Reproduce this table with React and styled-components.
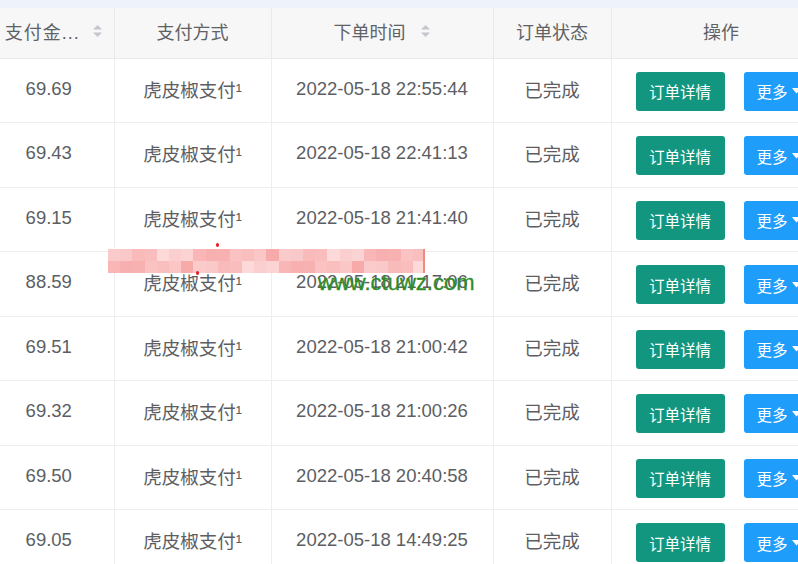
// Required Imports
import React from "react";
import styled, { createGlobalStyle } from "styled-components";
//------------------------------------------------------------------------------------------------------------------------------------------------------------------------------

const orders = [
  { amount: "69.69", time: "2022-05-18 22:55:44" },
  { amount: "69.43", time: "2022-05-18 22:41:13" },
  { amount: "69.15", time: "2022-05-18 21:41:40" },
  { amount: "88.59", time: "2022-05-18 21:17:06" },
  { amount: "69.51", time: "2022-05-18 21:00:42" },
  { amount: "69.32", time: "2022-05-18 21:00:26" },
  { amount: "69.50", time: "2022-05-18 20:40:58" },
  { amount: "69.05", time: "2022-05-18 14:49:25" },
];

const mosaicShades = [
  "#fbcbcb", "#f9bdbd", "#fcd3d3", "#f7b1b1", "#fac6c6", "#f9c9c9", "#fdd9d9",
  "#f8b6b6", "#fac2c2", "#f6aaaa", "#f9baba", "#fbcfcf", "#f7afaf", "#f9bebe",
];
//------------------------------------------------------------------------------------------------------------------------------------------------------------------------------

const SortIcon = () => (
  <svg width="11" height="14" viewBox="0 0 11 14">
    <path d="M5.5 1 L10 5.5 H1 Z" fill="#c3c6cc" />
    <path d="M5.5 13 L10 8.5 H1 Z" fill="#c3c6cc" />
  </svg>
);

const Caret = () => (
  <svg width="9" height="6" viewBox="0 0 9 6">
    <path d="M0 0 H9 L4.5 5.5 Z" fill="#ffffff" />
  </svg>
);

const App = () => {
  return (
    <>
      <GlobalStyle />
      <Page>
        <Table>
          <colgroup>
            <col style={{ width: 130 }} />
            <col style={{ width: 157 }} />
            <col style={{ width: 222 }} />
            <col style={{ width: 118 }} />
            <col style={{ width: 220 }} />
          </colgroup>
          <thead>
            <HeadRow>
              <HeadCell>
                <HeadLabel $gap={12} $shift={10} $spacing={1}>
                  支付金...
                  <SortIcon />
                </HeadLabel>
              </HeadCell>
              <HeadCell>支付方式</HeadCell>
              <HeadCell>
                <HeadLabel $gap={14}>
                  下单时间
                  <SortIcon />
                </HeadLabel>
              </HeadCell>
              <HeadCell>订单状态</HeadCell>
              <HeadCell>操作</HeadCell>
            </HeadRow>
          </thead>
          <tbody>
            {orders.map((order) => (
              <Row key={order.time}>
                <Cell>{order.amount}</Cell>
                <Cell>虎皮椒支付¹</Cell>
                <Cell>{order.time}</Cell>
                <Cell>已完成</Cell>
                <ActionCell>
                  <Actions>
                    <Button $variant="detail">订单详情</Button>
                    <Button $variant="more">
                      更多
                      <Caret />
                    </Button>
                  </Actions>
                </ActionCell>
              </Row>
            ))}
          </tbody>
        </Table>

        <Mosaic>
          {Array.from({ length: 52 }).map((_, i) => (
            <MosaicCell
              key={i}
              $color={mosaicShades[(i * 5 + Math.floor(i / 26) * 3) % mosaicShades.length]}
              $edge={i % 26 === 25}
            />
          ))}
        </Mosaic>
        <Dot $x={216} $y={243} />
        <Dot $x={196} $y={271} />
        <Watermark>www.ctuwz.com</Watermark>
      </Page>
    </>
  );
};

//------------------------------------------------------------------------------------------------------------------------------------------------------------------------------
// CSS Styling
const GlobalStyle = createGlobalStyle`
  html, body {
    margin: 0;
    padding: 0;
    background: #ffffff;
  }
  body {
    font-family: "Liberation Sans", "Noto Sans CJK SC", sans-serif;
  }
`;

const Page = styled.div`
  position: relative;
  width: 798px;
  height: 564px;
  overflow: hidden;
  padding-top: 8px;
  box-sizing: border-box;
  background: linear-gradient(#eef2fb 0 8px, #ffffff 8px);
`;

const Table = styled.table`
  margin-left: -16px;
  border-collapse: collapse;
  table-layout: fixed;
  width: 847px;
  color: #5c5e63;
  font-size: 18.5px;
`;

const HeadRow = styled.tr`
  height: 50px;
`;

const HeadCell = styled.th`
  padding: 0 0 3px;
  background: #f7f7f8;
  font-weight: normal;
  font-size: 18px;
  color: #606266;
  text-align: center;
  border-right: 1px solid #e9eaee;
  border-bottom: 1px solid #e9eaee;
  white-space: nowrap;
`;

const HeadLabel = styled.span`
  display: inline-flex;
  align-items: center;
  gap: ${({ $gap }) => $gap}px;
  margin-left: ${({ $shift = 0 }) => $shift}px;
  letter-spacing: ${({ $spacing = 0 }) => $spacing}px;
`;

const Row = styled.tr`
  height: 64.5px;
`;

const Cell = styled.td`
  padding: 0 0 3px;
  text-align: center;
  border-right: 1px solid #eceef1;
  border-bottom: 1px solid #eceef1;
  white-space: nowrap;
`;

const ActionCell = styled(Cell)`
  text-align: left;
  padding: 2px 0 0 24px;
`;

const Actions = styled.div`
  display: flex;
  gap: 19px;
`;

const Button = styled.div`
  display: inline-flex;
  align-items: center;
  justify-content: ${({ $variant }) => ($variant === "more" ? "flex-start" : "center")};
  gap: 4px;
  height: 39px;
  width: ${({ $variant }) => ($variant === "more" ? "80px" : "89px")};
  padding-left: ${({ $variant }) => ($variant === "more" ? "13px" : "0")};
  box-sizing: border-box;
  border-radius: 3px;
  font-size: 15.5px;
  color: #ffffff;
  background: ${({ $variant }) => ($variant === "more" ? "#1e9dfb" : "#13967f")};
`;

const Mosaic = styled.div`
  position: absolute;
  left: 108px;
  top: 249px;
  display: grid;
  grid-template-columns: repeat(26, 12.2px);
  grid-template-rows: repeat(2, 12px);
`;

const MosaicCell = styled.div`
  background: ${({ $color }) => $color};
  border-right: ${({ $edge }) => ($edge ? "2px solid #f08a7e" : "none")};
`;

const Dot = styled.div`
  position: absolute;
  left: ${({ $x }) => $x}px;
  top: ${({ $y }) => $y}px;
  width: 3px;
  height: 4px;
  border-radius: 50%;
  background: #e8141e;
`;

const Watermark = styled.div`
  position: absolute;
  left: 318px;
  top: 270px;
  font-family: "Liberation Sans", sans-serif;
  font-size: 22px;
  color: #2f8c2a;
  -webkit-text-stroke: 0.3px #2f8c2a;
`;

export default App;
